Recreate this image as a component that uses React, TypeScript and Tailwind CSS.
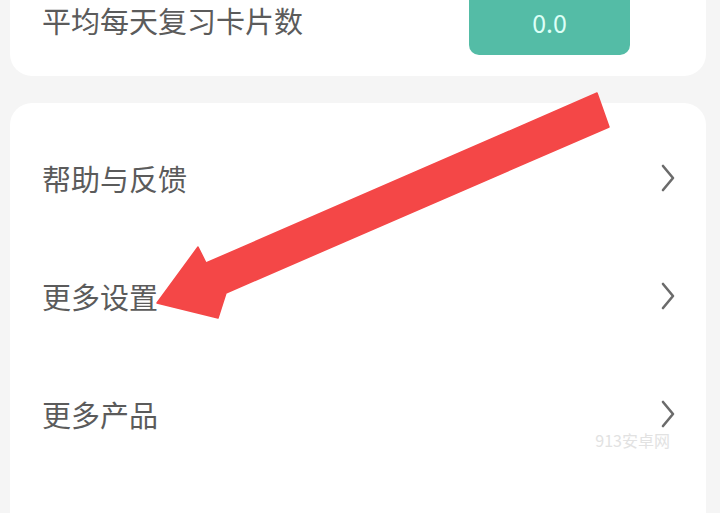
import React from 'react'

const font = { fontFamily: '"Noto Sans CJK SC", "Noto Sans", sans-serif' }

function Chevron() {
  return (
    <svg width="14" height="28" viewBox="0 0 14 28" fill="none" className="shrink-0">
      <path d="M2 2 L12 14 L2 26" stroke="#6b6b6b" strokeWidth="2.6" strokeLinecap="round" strokeLinejoin="round" />
    </svg>
  )
}

function Row({ label, children }: { label: string; children?: React.ReactNode }) {
  return (
    <div className="relative flex h-[118px] items-center justify-between pl-[32px] pr-[31px]">
      <span className="text-[29px] leading-none text-[#5b5b5b]">{label}</span>
      <Chevron />
      {children}
    </div>
  )
}

export default function App() {
  return (
    <div className="relative h-[513px] w-[720px] overflow-hidden bg-[#f5f5f5]" style={font}>
      <div className="flex flex-col px-[10px]">
        <div className="flex h-[76px] w-[696px] justify-between rounded-b-[22px] bg-white pl-[32px] pr-[76px]">
          <span className="mt-[4px] text-[29px] leading-[32px] text-[#5b5b5b]">平均每天复习卡片数</span>
          <div className="flex h-[55px] w-[161px] items-center justify-center rounded-b-[10px] bg-[#54bca6] pb-[10px]">
            <span className="text-[25px] leading-none text-[#dcfff6]">0.0</span>
          </div>
        </div>
        <div className="mt-[27px] flex w-[696px] flex-col rounded-t-[22px] bg-white pt-[16px] h-[430px]">
          <Row label="帮助与反馈" />
          <Row label="更多设置" />
          <Row label="更多产品">
            <span className="absolute right-[36px] top-[77px] text-[16px] leading-none text-[#e2e2e2]">913安卓网</span>
          </Row>
        </div>
      </div>
      <svg className="absolute left-0 top-0" width="720" height="513" viewBox="0 0 720 513">
        <polygon
          points="597,93 609,127 226,293 218,318 157,303 198,247 206,263"
          fill="#f44747"
          stroke="#f44747"
          strokeWidth="1.5"
          strokeLinejoin="round"
        />
      </svg>
    </div>
  )
}
